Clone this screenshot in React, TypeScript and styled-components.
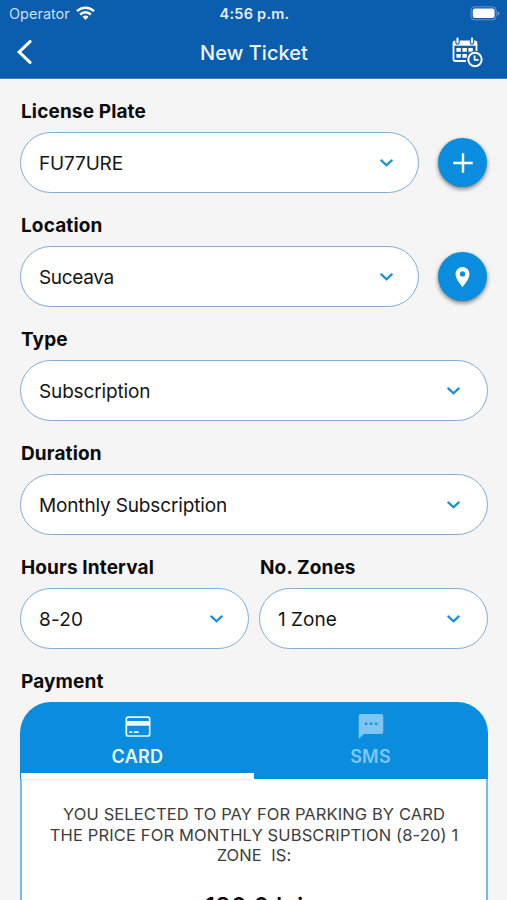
import React from "react";
import styled, { createGlobalStyle } from "styled-components";

const GlobalStyle = createGlobalStyle`
  * { box-sizing: border-box; }
  body { margin: 0; background: #f5f5f5; overflow: hidden; }
`;

const Screen = styled.div`
  width: 507px;
  height: 900px;
  overflow: hidden;
  background: #f5f5f5;
  color: #0b0b0b;
  font-family: Inter, "Liberation Sans", sans-serif;
`;

const Header = styled.header`
  height: 79px;
  background: #0b5dae;
  color: #fff;
  border-bottom: 1px solid #3a80c4;
`;

const StatusBar = styled.div`
  display: grid;
  grid-template-columns: 1fr auto 1fr;
  align-items: center;
  height: 27px;
  padding: 0 7px 0 9px;
`;

const Carrier = styled.div`
  display: flex;
  align-items: center;
  gap: 6px;
  font-size: 14.5px;
  letter-spacing: 0px;
  color: #c9dff5;
`;

const Clock = styled.div`
  font-size: 14.5px;
  font-weight: 600;
  letter-spacing: 0.25px;
  color: #e3effb;
`;

const BatterySlot = styled.div`
  display: flex;
  justify-content: flex-end;
`;

const NavBar = styled.nav`
  display: grid;
  grid-template-columns: 1fr auto 1fr;
  align-items: center;
  height: 50px;
  padding: 0 23px 0 16px;
`;

const NavButton = styled.button<{ $end?: boolean }>`
  display: flex;
  justify-self: ${(p) => (p.$end ? "end" : "start")};
  padding: 0;
  border: 0;
  background: none;
  color: #fff;
`;

const Title = styled.h1`
  margin: 1px 0 0 8px;
  color: #eef7ff;
  font-size: 20px;
  line-height: 24px;
  font-weight: 500;
  letter-spacing: 0.05px;
`;

const Form = styled.main`
  display: flex;
  flex-direction: column;
  gap: 20px;
  padding: 20px 19px 0 20px;
`;

const FieldRow = styled.div`
  display: flex;
  align-items: flex-end;
  gap: 10px;
`;

const FieldBox = styled.div`
  display: flex;
  flex: 1;
  min-width: 0;
  flex-direction: column;
  gap: 9px;
`;

const Label = styled.div`
  padding: 1px 0 0 1px;
  height: 24px;
  font-size: 19px;
  line-height: 24px;
  font-weight: 700;
  letter-spacing: 0.13px;
  white-space: nowrap;
`;

const Select = styled.button<{ $inset?: number }>`
  display: flex;
  align-items: center;
  justify-content: space-between;
  height: 61px;
  padding: 0 ${(p) => p.$inset ?? 27}px 0 18px;
  border: 1px solid #82acd8;
  border-radius: 31px;
  background: #fff;
  color: #151515;
  font-family: inherit;
`;

const Value = styled.span<{ $spacing?: number }>`
  padding-top: 1px;
  font-size: 19px;
  letter-spacing: ${(p) => p.$spacing ?? -0.15}px;
  white-space: nowrap;
`;

const RoundButton = styled.button`
  display: flex;
  align-items: center;
  justify-content: center;
  width: 49px;
  height: 49px;
  margin: 0 1px 6px 9px;
  padding: 0;
  border: 0;
  border-radius: 50%;
  background: #0b8ddf;
  color: #fff;
  box-shadow: 0 2px 4px rgba(0, 0, 0, 0.5);
`;

const PaymentCard = styled.section`
  height: 260px;
  overflow: hidden;
  border-radius: 31px 31px 0 0;
  background: #fff;
`;

const Tabs = styled.div`
  display: grid;
  grid-template-columns: 1fr 1fr;
  height: 77px;
  padding: 0 1px;
  background: #0b8ddf;
`;

const Tab = styled.div<{ $active?: boolean }>`
  display: flex;
  flex-direction: column;
  align-items: center;
  padding-top: 11px;
  gap: 5px;
  color: ${(p) => (p.$active ? "#eaf7ff" : "#80c6f3")};
  border-bottom: ${(p) => (p.$active ? "6px solid #fff" : "0")};
`;

const TabLabel = styled.span<{ $spacing: number }>`
  font-size: 18px;
  line-height: 22px;
  font-weight: 600;
  letter-spacing: ${(p) => p.$spacing}px;
`;

const PaymentBody = styled.div`
  height: 183px;
  border: solid #70bcee;
  border-width: 0 2px;
  background: linear-gradient(#ededed, #fff) 0 0 / 50% 3px no-repeat #fff;
`;

const Message = styled.div`
  display: flex;
  flex-direction: column;
  align-items: center;
  padding-top: 25px;
  color: #3d3d3d;
  font-size: 16.5px;
  line-height: 20.5px;
`;

const MessageLine = styled.span<{ $spacing: number }>`
  letter-spacing: ${(p) => p.$spacing}px;
  white-space: pre;
`;

const Price = styled.div`
  margin-top: 26px;
  text-align: center;
  color: #000;
  font-size: 25px;
  line-height: 30px;
  font-weight: 500;
`;

const WifiIcon = () => (
  <svg width="19" height="15" viewBox="0 0 19 15" fill="none" stroke="#fff" strokeWidth="2.5">
    <path d="M1 5.2C5.8.5 13.2.5 18 5.2" />
    <path d="M4.2 8.5C7.2 5.6 11.8 5.6 14.8 8.5" />
    <path d="M6.5 10.8Q9.5 8.3 12.5 10.8L9.5 13.9Z" fill="#fff" stroke="none" />
  </svg>
);

const BatteryIcon = () => (
  <svg width="30" height="15" viewBox="0 0 30 15" fill="none">
    <rect x="1" y=".8" width="25.2" height="13" rx="3.6" stroke="#6398cf" />
    <rect x="2.8" y="2.6" width="21.8" height="9.4" rx="2" fill="#fff" />
    <path d="M27.7 5.2c2 .7 2 3.7 0 4.4Z" fill="#76a8d8" />
  </svg>
);

const BackIcon = () => (
  <svg width="17" height="24" viewBox="0 0 17 24" fill="none" stroke="currentColor" strokeWidth="3.1">
    <path d="M14 1.6 3.2 12 14 22.4" strokeLinecap="round" strokeLinejoin="miter" />
  </svg>
);

const CalendarClockIcon = () => (
  <svg width="32" height="31" viewBox="0 0 32 31" fill="none" stroke="currentColor">
    <path d="M24.5 14V6.2Q24.5 4.5 22.8 4.5H3.2Q1.5 4.5 1.5 6.2V22Q1.5 24 3.5 24H14" strokeWidth="1.8" />
    <path d="M1.5 4.5h23v4.2h-23Z" fill="currentColor" stroke="none" />
    <path d="M5.5 1.5v4M20 1.5v4" stroke="#0b5dae" strokeWidth="4.4" strokeLinecap="round" />
    <path d="M5.5 1.6v4M20 1.6v4" strokeWidth="2.2" strokeLinecap="round" />
    <path d="M4.4 11h4.4v3.8H4.4zM10.4 11h4.4v3.8h-4.4zM16.4 11h4.4v3.8h-4.4zM4.4 17h4.4v3.8H4.4zM10.4 17h4.4v3.8h-4.4z" fill="currentColor" stroke="none" />
    <circle cx="23" cy="22.5" r="8.4" fill="#0b5dae" stroke="none" />
    <circle cx="23" cy="22.5" r="6.7" strokeWidth="2" />
    <path d="M22.6 18.5v4.3h4" strokeWidth="1.8" />
  </svg>
);

const ChevronIcon = () => (
  <svg width="13" height="8" viewBox="0 0 13 8" fill="none" stroke="#168fdb" strokeWidth="2.2">
    <path d="m1.3 1.4 5.2 4.8 5.2-4.8" strokeLinecap="round" />
  </svg>
);

const PlusIcon = () => (
  <svg width="20" height="20" viewBox="0 0 20 20" stroke="currentColor" strokeWidth="2.4">
    <path d="M10 .3v19.4M.3 10h19.4" />
  </svg>
);

const PinIcon = () => (
  <svg width="15" height="20" viewBox="0 0 15 20" fill="currentColor">
    <path fillRule="evenodd" d="M7.5 0A7 7 0 0 0 .5 7c0 5.2 7 13 7 13s7-7.8 7-13a7 7 0 0 0-7-7Zm0 4.3a2.6 2.6 0 1 1 0 5.2 2.6 2.6 0 0 1 0-5.2Z" />
  </svg>
);

const CardIcon = () => (
  <svg width="26" height="28" viewBox="0 0 26 28" fill="none" stroke="currentColor">
    <rect x="1.3" y="4.2" width="23.4" height="18.8" rx="2" strokeWidth="1.7" />
    <path d="M1 10.4h24" strokeWidth="4.8" />
    <path d="M4.3 19.2h3M8.8 19.2h5" strokeWidth="1.8" />
  </svg>
);

const SmsIcon = () => (
  <svg width="26" height="28" viewBox="0 0 26 28">
    <path d="M2.6 1h20.8Q25.3 1 25.3 3v16q0 2-1.9 2H6L.7 25.8V3Q.7 1 2.6 1Z" fill="currentColor" />
    <path d="M6.8 9.4h2.6v2.6H6.8zM11.8 9.4h2.6v2.6h-2.6zM16.8 9.4h2.6v2.6h-2.6z" fill="#1c94df" />
  </svg>
);

type FieldProps = {
  label: string;
  value: string;
  valueSpacing?: number;
  inset?: number;
};

const Field = ({ label, value, valueSpacing, inset }: FieldProps) => (
  <FieldBox>
    <Label>{label}</Label>
    <Select $inset={inset}>
      <Value $spacing={valueSpacing}>{value}</Value>
      <ChevronIcon />
    </Select>
  </FieldBox>
);

export default function App() {
  return (
    <Screen>
      <GlobalStyle />
      <Header>
        <StatusBar>
          <Carrier>
            <span>Operator</span>
            <WifiIcon />
          </Carrier>
          <Clock>4:56 p.m.</Clock>
          <BatterySlot>
            <BatteryIcon />
          </BatterySlot>
        </StatusBar>
        <NavBar>
          <NavButton aria-label="Back">
            <BackIcon />
          </NavButton>
          <Title>New Ticket</Title>
          <NavButton $end aria-label="History">
            <CalendarClockIcon />
          </NavButton>
        </NavBar>
      </Header>
      <Form>
        <FieldRow>
          <Field label="License Plate" value="FU77URE" inset={25} />
          <RoundButton aria-label="Add plate">
            <PlusIcon />
          </RoundButton>
        </FieldRow>
        <FieldRow>
          <Field label="Location" value="Suceava" valueSpacing={-0.35} inset={25} />
          <RoundButton aria-label="Locate">
            <PinIcon />
          </RoundButton>
        </FieldRow>
        <FieldRow>
          <Field label="Type" value="Subscription" />
        </FieldRow>
        <FieldRow>
          <Field label="Duration" value="Monthly Subscription" />
        </FieldRow>
        <FieldRow>
          <Field label="Hours Interval" value="8-20" valueSpacing={0.15} inset={25} />
          <Field label="No. Zones" value="1 Zone" valueSpacing={0} />
        </FieldRow>
        <FieldBox>
          <Label>Payment</Label>
          <PaymentCard>
            <Tabs>
              <Tab $active>
                <CardIcon />
                <TabLabel $spacing={0.3}>CARD</TabLabel>
              </Tab>
              <Tab>
                <SmsIcon />
                <TabLabel $spacing={0.2}>SMS</TabLabel>
              </Tab>
            </Tabs>
            <PaymentBody>
              <Message>
                <MessageLine $spacing={0.1}>YOU SELECTED TO PAY FOR PARKING BY CARD</MessageLine>
                <MessageLine $spacing={0.14}>THE PRICE FOR MONTHLY SUBSCRIPTION (8-20) 1</MessageLine>
                <MessageLine $spacing={0.1}>{"ZONE  IS:"}</MessageLine>
              </Message>
              <Price>180.0 lei</Price>
            </PaymentBody>
          </PaymentCard>
        </FieldBox>
      </Form>
    </Screen>
  );
}
